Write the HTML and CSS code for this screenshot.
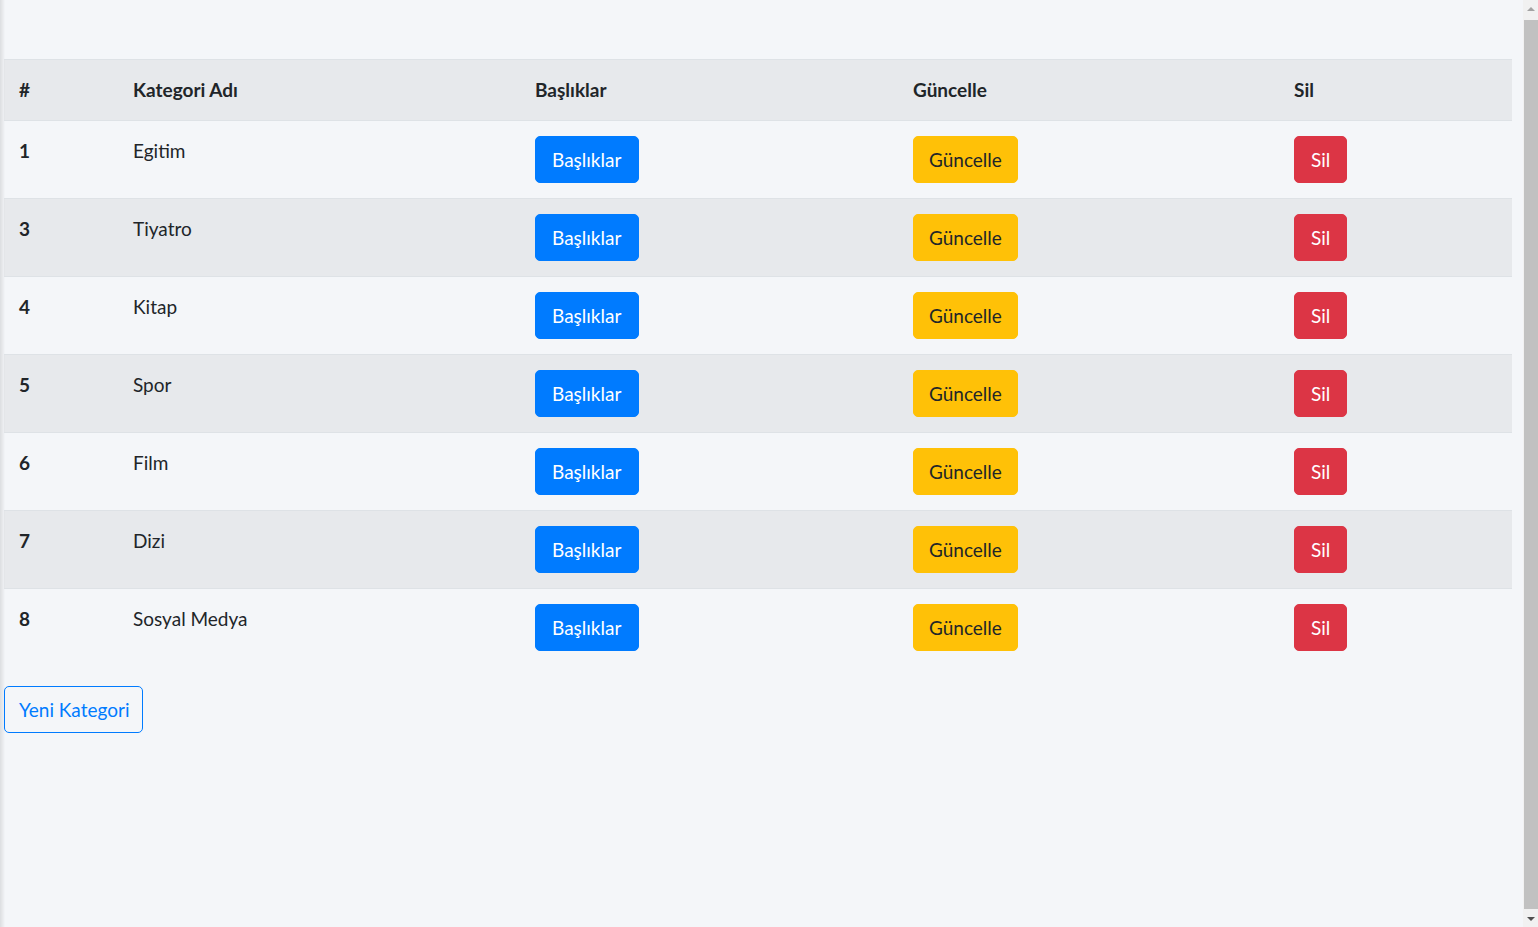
FILE: index.html
```html
<!DOCTYPE html>
<html lang="tr">
<head>
<meta charset="utf-8">
<title>Kategoriler</title>
<link rel="stylesheet" href="styles.css">
</head>
<body>
<div class="page">
  <table class="table">
    <thead>
      <tr>
        <th class="c-id">#</th>
        <th class="c-name">Kategori Adı</th>
        <th class="c-titles">Başlıklar</th>
        <th class="c-edit">Güncelle</th>
        <th class="c-del">Sil</th>
      </tr>
    </thead>
    <tbody>
      <tr><th>1</th><td>Egitim</td><td><a class="btn btn-primary">Başlıklar</a></td><td><a class="btn btn-warning">Güncelle</a></td><td><a class="btn btn-danger">Sil</a></td></tr>
      <tr><th>3</th><td>Tiyatro</td><td><a class="btn btn-primary">Başlıklar</a></td><td><a class="btn btn-warning">Güncelle</a></td><td><a class="btn btn-danger">Sil</a></td></tr>
      <tr><th>4</th><td>Kitap</td><td><a class="btn btn-primary">Başlıklar</a></td><td><a class="btn btn-warning">Güncelle</a></td><td><a class="btn btn-danger">Sil</a></td></tr>
      <tr><th>5</th><td>Spor</td><td><a class="btn btn-primary">Başlıklar</a></td><td><a class="btn btn-warning">Güncelle</a></td><td><a class="btn btn-danger">Sil</a></td></tr>
      <tr><th>6</th><td>Film</td><td><a class="btn btn-primary">Başlıklar</a></td><td><a class="btn btn-warning">Güncelle</a></td><td><a class="btn btn-danger">Sil</a></td></tr>
      <tr><th>7</th><td>Dizi</td><td><a class="btn btn-primary">Başlıklar</a></td><td><a class="btn btn-warning">Güncelle</a></td><td><a class="btn btn-danger">Sil</a></td></tr>
      <tr><th>8</th><td>Sosyal Medya</td><td><a class="btn btn-primary">Başlıklar</a></td><td><a class="btn btn-warning">Güncelle</a></td><td><a class="btn btn-danger">Sil</a></td></tr>
    </tbody>
  </table>
  <a class="btn btn-outline-primary">Yeni Kategori</a>
</div>
<div class="scrollbar" aria-hidden="true">
  <div class="sb-arrow sb-up"><span class="tri-up"></span></div>
  <div class="sb-track"><div class="sb-thumb"></div></div>
  <div class="sb-arrow sb-down"><span class="tri-down"></span></div>
</div>
</body>
</html>
```
FILE: styles.css
```css
html, body {
  margin: 0;
  padding: 0;
}
body {
  font-family: Lato, "Liberation Sans", sans-serif;
  font-size: 19px;
  line-height: 30px;
  color: #212529;
  background-color: #f4f6f9;
  background-image: linear-gradient(90deg, rgba(0,0,0,0.1), rgba(0,0,0,0) 5px);
  background-repeat: repeat-y;
  background-size: 6px 100%;
}
.page {
  padding: 59px 26px 0 4px;
}
.table {
  width: 100%;
  border-collapse: collapse;
  margin-bottom: 20px;
}
.table th,
.table td {
  padding: 15px;
  text-align: left;
  vertical-align: top;
  border-top: 1px solid #dee2e6;
}
.table thead th {
  font-weight: 700;
  border-bottom: 1px solid #dee2e6;
  background: rgba(0,0,0,0.05);
}
.table tbody th {
  font-weight: 700;
}
.table tbody tr:nth-child(even) {
  background: rgba(0,0,0,0.05);
}
.table tbody tr:first-child th,
.table tbody tr:first-child td {
  border-top: 0;
}
.c-id { width: 84px; }
.c-name { width: 372px; }
.c-titles { width: 348px; }
.c-edit { width: 351px; }
.btn {
  display: inline-block;
  padding: 7.5px 15px;
  border: 1px solid transparent;
  border-radius: 5px;
  font-size: 19px;
  line-height: 30px;
  cursor: pointer;
}
.btn-primary { background: #007bff; border-color: #007bff; color: #fff; padding-left: 16px; padding-right: 17px; }
.btn-warning { background: #ffc107; border-color: #ffc107; color: #212529; }
.btn-danger { background: #dc3545; border-color: #dc3545; color: #fff; padding-left: 16px; padding-right: 16px; }
.btn-outline-primary { background: transparent; border-color: #007bff; color: #007bff; padding-left: 14px; padding-right: 13px; }

.scrollbar {
  position: fixed;
  top: 0;
  right: 0;
  bottom: 0;
  width: 15px;
  background: #f1f1f1;
  display: flex;
  flex-direction: column;
}
.sb-arrow {
  height: 17px;
  display: flex;
  align-items: center;
  justify-content: center;
  flex: none;
}
.sb-track {
  flex: 1;
  padding: 3px 0 1px 1px;
  display: flex;
}
.sb-thumb {
  flex: 1;
  background: #c1c1c1;
}
.tri-up {
  width: 0;
  height: 0;
  border-left: 4px solid transparent;
  border-right: 4px solid transparent;
  border-bottom: 4px solid #a3a3a3;
}
.tri-down {
  width: 0;
  height: 0;
  border-left: 4px solid transparent;
  border-right: 4px solid transparent;
  border-top: 4px solid #505050;
}
```
